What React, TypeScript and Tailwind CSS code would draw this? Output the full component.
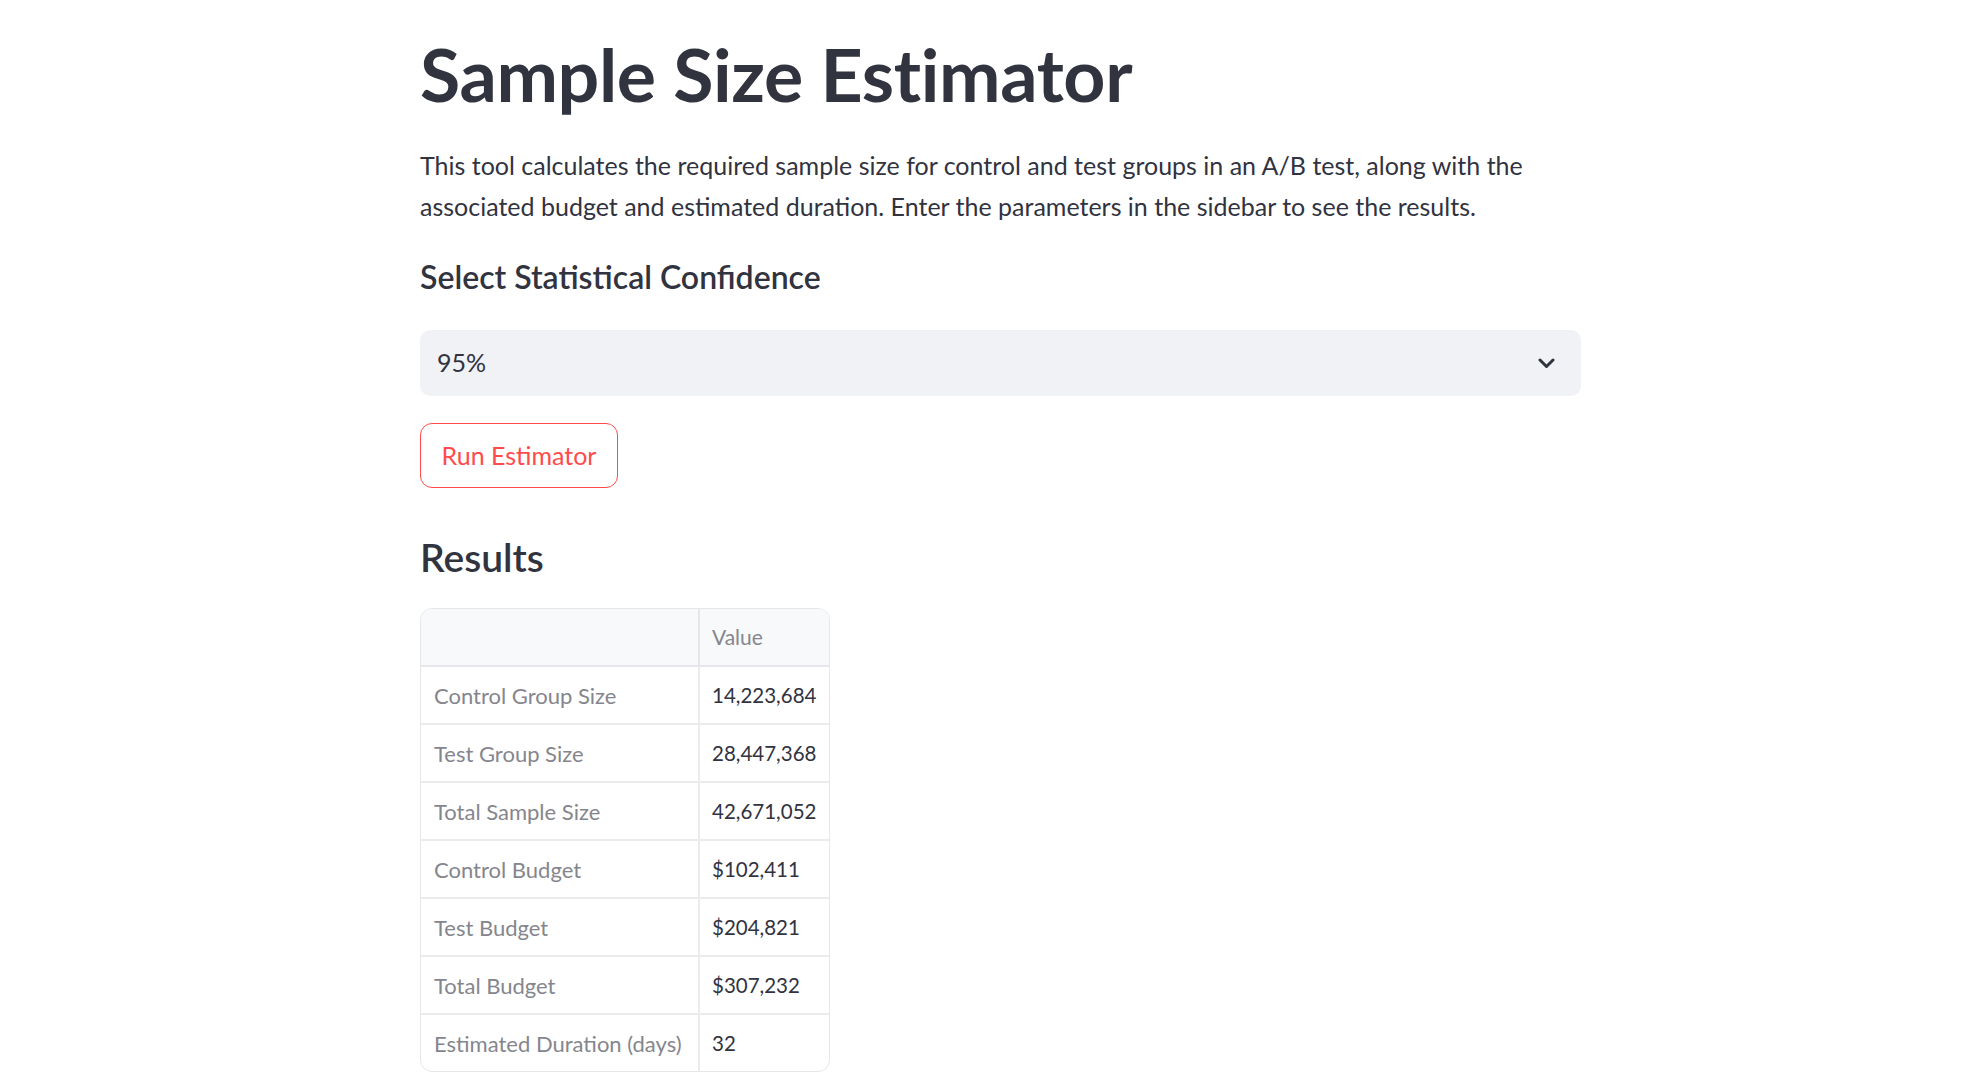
import React from "react";

const rows: [string, string][] = [
  ["Control Group Size", "14,223,684"],
  ["Test Group Size", "28,447,368"],
  ["Total Sample Size", "42,671,052"],
  ["Control Budget", "$102,411"],
  ["Test Budget", "$204,821"],
  ["Total Budget", "$307,232"],
  ["Estimated Duration (days)", "32"],
];

export default function App() {
  return (
    <div className="min-h-screen bg-white font-[Lato,sans-serif] text-[#31333f]">
      <div className="ml-[420px] w-[1161px] pt-[32px]">
        <h1 className="text-[73.5px] font-bold leading-[84px] tracking-[-0.005em]">Sample Size Estimator</h1>
        <p className="mt-[29px] text-[25px] leading-[41px]">
          This tool calculates the required sample size for control and test groups in an A/B test, along with the
          associated budget and estimated duration. Enter the parameters in the sidebar to see the results.
        </p>
        <h3 className="mt-[28px] text-[32px] font-semibold leading-[44px]">Select Statistical Confidence</h3>
        <div className="mt-[31px] flex h-[66px] items-center justify-between rounded-[10px] bg-[#f0f2f6] pl-[17px] pr-[26px]">
          <span className="text-[25px]">95%</span>
          <svg width="17" height="11" viewBox="0 0 17 11" fill="none">
            <path d="M2 2 L8.5 8.5 L15 2" stroke="#31333f" strokeWidth="3" strokeLinecap="round" strokeLinejoin="round" />
          </svg>
        </div>
        <button className="mt-[27px] flex h-[65px] w-[198px] items-center justify-center rounded-[12px] border border-[#ff4b4b] bg-white text-[25px] text-[#ff4b4b]">
          Run Estimator
        </button>
        <h3 className="mt-[43px] text-[39px] font-semibold leading-[52px]">Results</h3>
        <div className="mt-[25px] w-[410px] overflow-hidden rounded-[12px] border border-[#e6e7ea]">
          <div className="flex h-[58px] border-b-2 border-[#e6e7ea] bg-[#f8f9fb]">
            <div className="w-[279px] border-r-2 border-[#e6e7ea]" />
            <div className="flex items-center pl-[12px] text-[21px] text-[#85868d]">Value</div>
          </div>
          {rows.map(([k, v], i) => (
            <div
              key={k}
              className={i < rows.length - 1 ? "flex h-[58px] border-b-2 border-[#ebebed]" : "flex h-[56px]"}
            >
              <div className="flex w-[279px] items-center border-r-2 border-[#ebebed] pl-[13px] text-[22px] text-[#85868d]">{k}</div>
              <div className="flex items-center pl-[12px] text-[20.5px] text-[#31333f]">{v}</div>
            </div>
          ))}
        </div>
      </div>
    </div>
  );
}
